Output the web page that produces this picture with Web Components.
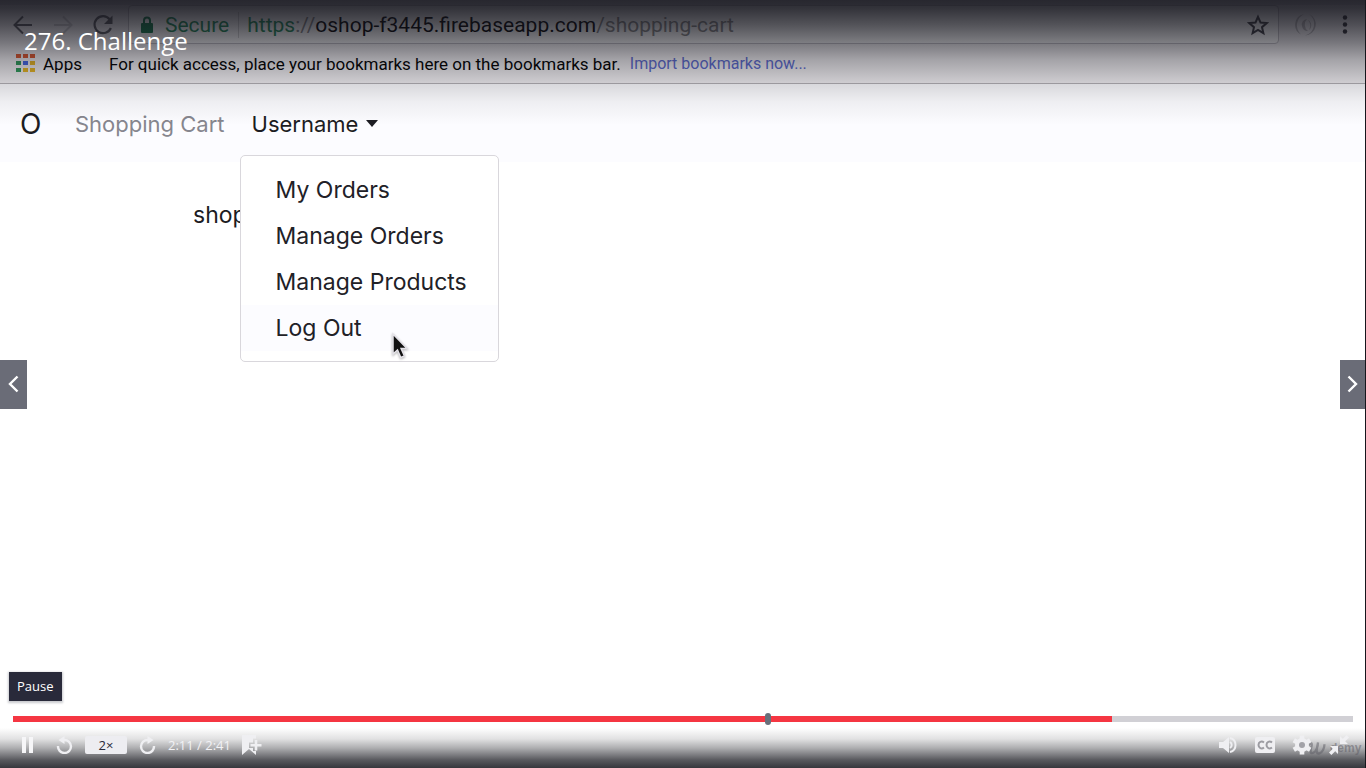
<!DOCTYPE html>
<html lang="en">
<head>
<meta charset="utf-8">
<title>276. Challenge</title>
<style>
body { margin: 0; background: #fff; font-family: Inter, "Liberation Sans", sans-serif; }
</style>
</head>
<body>
<lecture-stage>
  <screen-cast slot="video"></screen-cast>
  <player-overlay slot="overlay" heading="276. Challenge"></player-overlay>
</lecture-stage>
<script>
const define = (name, html) => customElements.define(name, class extends HTMLElement {
  constructor() {
    super();
    const t = document.createElement('template');
    t.innerHTML = html;
    this.attachShadow({ mode: 'open' }).append(t.content.cloneNode(true));
    const h = this.shadowRoot.querySelector('[data-heading]');
    if (h) h.textContent = this.getAttribute('heading');
  }
});

/* Stacks the video frame and the player controls in one grid cell. */
define('lecture-stage', `
<style>
:host { display: grid; min-height: 100vh; box-sizing: border-box; border-right: 1px solid #16161c; }
::slotted(*) { grid-area: 1 / 1; min-width: 0; }
</style>
<slot name="video"></slot><slot name="overlay"></slot>`);

define('browser-toolbar', `
<style>
:host { display: flex; align-items: center; box-sizing: border-box; height: 44px; padding: 5px 16px 0 12px; background: #f2f0f3; box-shadow: inset 0 5px #dcdade; font: 21px/26px Roboto, "Liberation Sans", sans-serif; }
button { display: flex; padding: 0; border: 0; background: none; }
.nav { display: flex; gap: 18px; margin-right: 14px; }
.box { flex: 1; display: flex; align-items: center; min-width: 0; box-sizing: border-box; height: 39px; border: 1px solid #c2c0c6; border-radius: 4px; background: #fff; padding: 0 9px 0 11px; }
.secure { color: #1a8a55; margin: 0 9px 0 10px; }
.url { border-left: 1px solid #d4d4d4; padding-left: 8px; white-space: nowrap; flex: 1; color: #888; }
.url b { font-weight: 400; color: #000; }
.url i { font-style: normal; color: #1a8a55; }
.ext { margin: 0 23px 0 15px; }
</style>
<div class="nav">
  <button aria-label="Back"><svg width="22" height="24" viewBox="0 0 22 24" fill="none" stroke="#5a5a60" stroke-width="2"><path d="M20 12H3M11 3.500 2.500 12l8.500 8.500"/></svg></button>
  <button aria-label="Forward"><svg width="22" height="24" viewBox="0 0 22 24" fill="none" stroke="#c9c8cc" stroke-width="2"><path d="M2 12h17M11 3.500l8.500 8.500-8.500 8.500"/></svg></button>
  <button aria-label="Reload"><svg width="22" height="24" viewBox="0 0 22 24"><path d="M17.600 6.200A8.500 8.500 0 1 0 18.900 15" fill="none" stroke="#5a5a60" stroke-width="2.200"/><path d="M20.500 2.500v8.500H12z" fill="#5a5a60"/></svg></button>
</div>
<div class="box">
  <svg width="15" height="20" viewBox="0 0 15 20"><rect x="1" y="8" width="12" height="10" rx="1" fill="#0f7a48"/><path d="M4 9V5.500a3 3 0 0 1 6 0V9" fill="none" stroke="#0f7a48" stroke-width="2"/></svg>
  <span class="secure">Secure</span>
  <span class="url"><i>https</i>://<b>oshop-f3445.firebaseapp.com</b>/shopping-cart</span>
  <button aria-label="Bookmark this page"><svg width="22" height="22" viewBox="0 0 22 22"><path d="M11 2.800l2.500 5.700 6.200.6-4.700 4.100 1.400 6-5.400-3.200-5.400 3.200 1.400-6-4.700-4.100 6.200-.6z" fill="none" stroke="#3c3c42" stroke-width="2"/></svg></button>
</div>
<button class="ext" aria-label="Extension"><svg width="24" height="24" viewBox="0 0 24 24" fill="#b9b7bb"><path d="M10 1A11 11 0 0 0 7 21.500 12.500 12.500 0 0 1 10 1z"/><path d="M15 1a12 12 0 0 1-4 21.500A11.200 11.200 0 0 0 15 1z"/><path d="M13 6a5.500 5.500 0 0 0-5 7 6 6 0 0 0 6 5 8 8 0 0 1-1-12z"/><path d="M14 7a8 8 0 0 1 1 10 6 6 0 0 0-1-10z"/></svg></button>
<button aria-label="Menu"><svg width="8" height="22" viewBox="0 0 8 22" fill="#303036"><circle cx="4" cy="3.500" r="2.200"/><circle cx="4" cy="10.500" r="2.200"/><circle cx="4" cy="17.500" r="2.200"/></svg></button>`);

define('bookmarks-bar', `
<style>
:host { display: flex; align-items: center; box-sizing: border-box; height: 40px; padding: 0 16px; border-bottom: 1px solid #b4b2b6; background: #f2f0f3; font: 17px/20px Roboto, "Liberation Sans", sans-serif; color: #000; white-space: nowrap; }
button { display: flex; align-items: center; gap: 8px; padding: 0; border: 0; background: none; font: inherit; color: inherit; margin-right: 27px; }
a { margin-left: 9px; font-size: 16px; color: #5b6ad0; text-decoration: none; }
</style>
<button><svg width="19" height="19" viewBox="0 0 19 19"><g fill="#e0582e"><path d="M0 0h5v4H0zM7 0h5v4H7zM14 0h5v4h-5z"/></g><path d="M0 7h5v4H0zM0 14h5v4H0z" fill="#2f9a5a"/><path d="M7 7h5v4H7z" fill="#4466e8"/><path d="M14 7h5v4h-5zM7 14h5v4H7zM14 14h5v4h-5z" fill="#e6b422"/></svg>Apps</button>
<span>For quick access, place your bookmarks here on the bookmarks bar.</span>
<a href="#import">Import bookmarks now...</a>`);

define('user-menu', `
<style>
:host { position: relative; display: flex; align-items: center; }
button { display: flex; align-items: center; gap: 8px; padding: 0; border: 0; background: none; font: inherit; color: #1c1c22; }
.menu { position: absolute; z-index: 1; left: -12px; top: calc(100% - 7px); box-sizing: border-box; width: 259px; padding: 11px 0 10px; border: 1px solid #d9d7dc; border-radius: 5px; background: #fff; font-size: 23px; }
a { display: block; padding: 0 35px; line-height: 46px; color: #212127; text-decoration: none; white-space: nowrap; }
a.active { background: #fcfcff; }
.cursor { position: absolute; left: 150px; top: 176px; filter: drop-shadow(0 1px 1px rgba(0,0,0,.3)); }
</style>
<button aria-expanded="true">Username<svg width="12" height="10" viewBox="0 0 12 10"><path d="M0 1h12L6 8z" fill="#1c1c22"/></svg></button>
<div class="menu">
  <a href="#my-orders">My Orders</a><a href="#manage-orders">Manage Orders</a><a href="#manage-products">Manage Products</a><a class="active" href="#log-out">Log Out</a>
  <svg class="cursor" width="20" height="28" viewBox="0 0 20 28"><path d="M2 2v20l4.500-4 3.300 7.500 3.600-1.600-3.300-7.400H16z" fill="#111" stroke="#e4e2e8" stroke-width="1.500"/></svg>
</div>`);

define('shop-page', `
<style>
:host { display: block; color: #1c1c22; font-size: 22px; line-height: 30px; }
nav { display: flex; box-sizing: border-box; height: 78px; padding: 2px 20px 0; background: #fcfcff; }
a { display: flex; align-items: center; color: #86868e; text-decoration: none; }
a.brand { width: 55px; font-size: 28px; color: #1c1c22; }
user-menu { margin-left: 27px; }
main { padding: 38px 0 0 193px; font-size: 23px; }
p { margin: 0; }
</style>
<nav><a class="brand" href="#home">O</a><a href="#cart">Shopping Cart</a><user-menu></user-menu></nav>
<main><p>shop</p></main>`);

define('screen-cast', `
<style>:host { display: block; background: #fff; }</style>
<browser-toolbar></browser-toolbar><bookmarks-bar></bookmarks-bar><shop-page></shop-page>`);

define('player-controls', `
<style>
:host { position: relative; display: block; padding: 0 12px 6px 13px; background: linear-gradient(rgba(41,42,48,0) 18px, rgba(41,42,48,.14) 29px, rgba(41,42,48,.38) 38px, rgba(41,42,48,.78) 50px, rgba(41,42,48,.98) 60px); font: 13px/18px "Open Sans", sans-serif; color: #f2f2f5; }
.tip { position: absolute; left: 9px; bottom: 67px; padding: 5px 8px 6px; background: #292a3a; color: #fff; box-shadow: 0 1px 2px 1px rgba(41,42,58,.25); }
.track { position: relative; display: flex; align-items: center; height: 18px; }
input { appearance: none; flex: 1; min-width: 0; height: 6px; margin: 0; background: linear-gradient(90deg, #f53642 82%, #d1d0d5 82%); }
input::-webkit-slider-thumb { appearance: none; width: 0; height: 6px; }
.mark { position: absolute; left: 56%; top: 3px; width: 6px; height: 12px; margin-left: 2px; border-radius: 3px; background: #686f7a; }
.row { display: flex; align-items: center; gap: 12px; height: 34px; padding: 0 4px 0 9px; }
button { display: flex; padding: 0; border: 0; background: none; font: inherit; color: inherit; }
.pause { margin-right: 11px; }
.speed { justify-content: center; width: 42px; border-radius: 2px; background: #ededf1; color: #292a3a; line-height: 18px; }
.save { margin-left: -2px; }
.right { position: relative; display: flex; align-items: center; gap: 17px; margin-left: auto; }
.logo { position: absolute; left: 88px; top: 4px; display: flex; align-items: flex-end; color: rgba(92,92,100,.5); font: bold 12px/18px "Liberation Sans", sans-serif; }
.right button { position: relative; }
</style>
<div class="tip" role="tooltip">Pause</div>
<div class="track"><input type="range" min="0" max="161" value="131" aria-label="Seek"><span class="mark"></span></div>
<div class="row">
  <button class="pause" aria-label="Pause"><svg width="11" height="18" viewBox="0 0 11 18" fill="#f6f6f8"><path d="M0 1h4v16H0zM7 1h4v16H7z"/></svg></button>
  <button aria-label="Rewind"><svg width="17" height="18" viewBox="0 0 17 18"><path d="M2 10A6.500 6.500 0 1 0 8 4" fill="none" stroke="#efeff2" stroke-width="2.400"/><path d="M2.500 4 8.500 0v8z" fill="#efeff2"/></svg></button>
  <button class="speed" aria-label="Playback rate">2×</button>
  <button aria-label="Forward"><svg width="17" height="18" viewBox="0 0 17 18"><path d="M15 10A6.500 6.500 0 1 1 9 4" fill="none" stroke="#efeff2" stroke-width="2.400"/><path d="M14.500 4 8.500 0v8z" fill="#efeff2"/></svg></button>
  <span>2:11 / 2:41</span>
  <button class="save" aria-label="Add bookmark"><svg width="21" height="20" viewBox="0 0 21 20"><path d="M1 0h14v3.500h-3V7.500H8v5.500h4v3h3v4l-7-6-7 6z" fill="#efeff2"/><path d="M15 5v10.500M9.500 10.200h11" stroke="#efeff2" stroke-width="2.600"/></svg></button>
  <div class="right">
    <span class="logo" aria-hidden="true"><svg width="24" height="18" viewBox="0 0 26 18" fill="none" stroke="#5c5c64" stroke-opacity=".5" stroke-width="2.500"><path d="M2 7c3-5 5-4 4 0-2 6-1 9 2 7 3-1 5-7 5-11-1 6-3 12 1 12 4-1 6-6 6-10"/></svg>demy</span>
    <button aria-label="Volume"><svg width="20" height="20" viewBox="0 0 20 20"><path d="M1 7h4l6-5v16l-6-5H1z" fill="#efeff2"/><path d="M12 7a3.500 3.500 0 0 1 0 6" fill="none" stroke="#efeff2" stroke-width="2"/><path d="M12 3a7.200 7.200 0 0 1 0 14" fill="none" stroke="#efeff2" stroke-width="2"/></svg></button>
    <button aria-label="Captions"><svg width="20" height="18" viewBox="0 0 20 18"><rect y="1" width="20" height="16" rx="2" fill="#efeff2"/><path d="M9 6.500C6.500 4.500 3.500 6 3.500 9s3 4.500 5.500 2.500M17 6.500c-2.500-2-5.500-.5-5.500 2.500s3 4.500 5.500 2.500" fill="none" stroke="#9c9ca2" stroke-width="2"/></svg></button>
    <button aria-label="Settings"><svg width="20" height="20" viewBox="0 0 20 20"><g stroke="#efeff2" stroke-width="4.600"><path d="M10 .5v19M1.800 5.200l16.400 9.600M1.800 14.800l16.400-9.600"/></g><circle cx="10" cy="10" r="7" fill="#efeff2"/><circle cx="10" cy="10" r="3" fill="#a2a2a8"/></svg></button>
    <button aria-label="Exit fullscreen"><svg width="20" height="20" viewBox="0 0 20 20" fill="#efeff2"><path d="M11 1v8h8l-2.800-2.800L20 2.400 17.600 0l-3.800 3.800zM9 19v-8H1l2.800 2.800L0 17.600 2.400 20l3.800-3.800z"/></svg></button>
  </div>
</div>`);

/* Title on top, previous and next in the middle, controls at the bottom. */
define('player-overlay', `
<style>
:host { position: relative; display: grid; grid-template-rows: 1fr auto 1fr; background: linear-gradient(rgba(20,20,28,.9) 0, rgba(20,20,28,.87) 8px, rgba(20,20,28,.73) 25px, rgba(20,20,28,.55) 43px, rgba(20,20,28,.35) 60px, rgba(20,20,28,.16) 83px, rgba(20,20,28,.06) 102px, rgba(20,20,28,0) 125px) no-repeat; }
h1 { margin: 0; padding: 25px 24px 0; font: 24px/32px "Open Sans", sans-serif; color: #fff; }
.mid { display: flex; justify-content: space-between; }
.mid button { display: grid; place-items: center; width: 27px; height: 49px; padding: 0; border: 0; background: #6a6c77; }
.mid button:last-child { width: 25px; }
player-controls { align-self: end; }
</style>
<h1 data-heading></h1>
<div class="mid">
  <button aria-label="Previous lecture"><svg width="11" height="18" viewBox="0 0 11 18" fill="none" stroke="#fff" stroke-width="2.400"><path d="M9.500 1.500 2 9l7.500 7.500"/></svg></button>
  <button aria-label="Next lecture"><svg width="11" height="18" viewBox="0 0 11 18" fill="none" stroke="#fff" stroke-width="2.400"><path d="M1.500 1.500 9 9l-7.500 7.500"/></svg></button>
</div>
<player-controls></player-controls>`);
</script>
</body>
</html>
